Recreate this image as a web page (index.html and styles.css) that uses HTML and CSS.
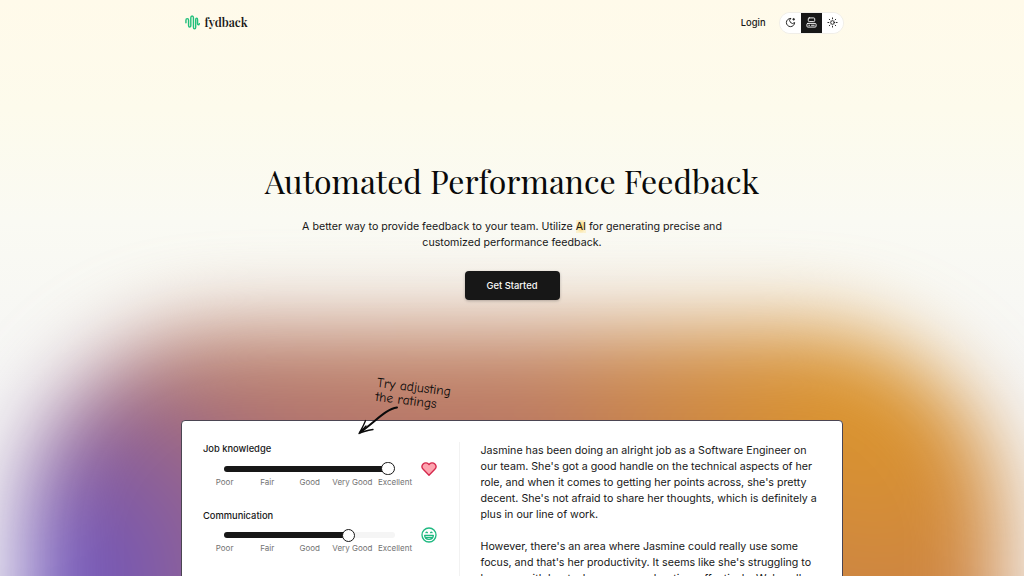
FILE: index.html
```html
<!doctype html>
<html lang="en">
  <head>
    <meta charset="UTF-8" />
    <meta name="viewport" content="width=device-width, initial-scale=1.0" />
    <title>fydback</title>
    <link rel="stylesheet" href="styles.css">
  </head>
  <body>
    <div class="glow"></div>

    <header class="navbar">
      <a class="brand" href="/">
        <svg viewBox="0 0 16 16">
          <path d="M1 8.3V5.6c0-2.3 2.8-2.3 2.8 0v5.6c0 2.2 2.4 2.2 2.4 0V3c0-2.6 2.8-2.6 2.8 0v10c0 2.4 2.4 2.4 2.4 0V5c0-2.2 2-2.2 2 0v4c0 1.8 1.6 1.8 1.9.2" />
        </svg>
        <span class="brand-name">fydback</span>
      </a>
      <nav class="nav-actions">
        <a class="login" href="/login">Login</a>
        <div class="theme-toggle">
          <button aria-label="Dark">
            <svg viewBox="0 0 24 24">
              <path d="M12 3a6 6 0 0 0 9 9 9 9 0 1 1-9-9Z" />
              <path d="M19 3v4M21 5h-4" />
            </svg>
          </button>
          <button class="active" aria-label="System">
            <svg viewBox="0 0 24 24">
              <rect width="14" height="8" x="5" y="2" rx="2" />
              <rect width="20" height="8" x="2" y="14" rx="2" />
              <path d="M6 18h2M12 18h6" />
            </svg>
          </button>
          <button aria-label="Light">
            <svg viewBox="0 0 24 24">
              <circle cx="12" cy="12" r="4" />
              <path d="M12 2v2M12 20v2M4.93 4.93l1.41 1.41M17.66 17.66l1.41 1.41M2 12h2M20 12h2M6.34 17.66l-1.41 1.41M19.07 4.93l-1.41 1.41" />
            </svg>
          </button>
        </div>
      </nav>
    </header>

    <main>
      <section class="hero">
        <h1>Automated Performance Feedback</h1>
        <p>
          A better way to provide feedback to your team. Utilize <mark>AI</mark> for generating precise and<br />
          customized performance feedback.
        </p>
        <a class="cta" href="/login">Get Started</a>
      </section>

      <section class="demo">
        <div class="hint">
          <div class="hint-text">Try adjusting<br />the ratings</div>
          <svg class="hint-arrow" viewBox="0 0 44 32">
            <path class="shaft" d="M41 2.5C30 4 20 16 4 27.5" />
            <path d="M9.5 15.500C8 20 5.5 24 3 28.5c4-2 8-3 14-4M3 28.5l7-7.5" />
          </svg>
        </div>

        <div class="ratings">
          <div class="rating">
            <h2>Job knowledge</h2>
            <div class="rating-row">
              <div class="slider">
                <div class="track"><div class="range" style="width: 96%"></div><div class="thumb"></div></div>
                <div class="labels">
                  <span>Poor</span><span>Fair</span><span>Good</span><span>Very Good</span><span>Excellent</span>
                </div>
              </div>
              <svg class="mood heart" viewBox="0 0 24 24">
                <path d="M12 21.5 3.3 12.5A5.7 5.7 0 0 1 3.2 4.6a5.7 5.7 0 0 1 8.8.8 5.7 5.7 0 0 1 8.8-.8 5.7 5.7 0 0 1-.1 7.900Z" />
              </svg>
            </div>
          </div>

          <div class="rating">
            <h2>Communication</h2>
            <div class="rating-row">
              <div class="slider">
                <div class="track"><div class="range" style="width: 73%"></div><div class="thumb"></div></div>
                <div class="labels">
                  <span>Poor</span><span>Fair</span><span>Good</span><span>Very Good</span><span>Excellent</span>
                </div>
              </div>
              <svg class="mood smile" viewBox="0 0 24 24">
                <circle cx="12" cy="12" r="10.5" />
                <path d="M5.5 12.5h13c0 8-13 8-13 0ZM7 15.5h10M7.5 8.5q1-1.5 2 0M14.5 8.5q1-1.5 2 0" />
              </svg>
            </div>
          </div>
        </div>

        <div class="feedback">
          <p>
            Jasmine has been doing an alright job as a Software Engineer on<br />
            our team. She's got a good handle on the technical aspects of her<br />
            role, and when it comes to getting her points across, she's pretty<br />
            decent. She's not afraid to share her thoughts, which is definitely a<br />
            plus in our line of work.
          </p>
          <p>
            However, there's an area where Jasmine could really use some<br />
            focus, and that's her productivity. It seems like she's struggling to<br />
            keep up with her tasks or manage her time effectively. We've all
          </p>
        </div>
      </section>
    </main>
  </body>
</html>
```
FILE: styles.css
```css
* {
  margin: 0;
  padding: 0;
  box-sizing: border-box;
}

body {
  position: relative;
  height: 576px;
  overflow: hidden;
  font-family: Inter, 'Liberation Sans', sans-serif;
  font-size: 10.67px;
  line-height: 16px;
  color: #171717;
  background: linear-gradient(#fffaea, #fdfbec 110px, #fafaf3 220px, #f5f5f5 400px);
}

a {
  color: inherit;
  text-decoration: none;
}

svg {
  fill: none;
  stroke: currentColor;
  stroke-width: 2;
  stroke-linecap: round;
  stroke-linejoin: round;
}

/* blurred backdrop behind the demo card */
.glow {
  position: absolute;
  z-index: -1;
  left: 26px;
  top: 327px;
  width: 976px;
  height: 620px;
  border-radius: 200px;
  filter: blur(41px);
  background:
    radial-gradient(circle at 4% 42%, #6b54c4 0, rgba(107, 84, 196, 0) 250px),
    radial-gradient(circle at 86% 13%, #dd962a 0, rgba(221, 150, 42, 0) 340px),
    linear-gradient(rgba(214, 160, 92, 0.5), rgba(214, 160, 92, 0) 130px),
    linear-gradient(90deg, #9c637f, #b4736b 40%, #c47a50);
}

.navbar {
  display: flex;
  align-items: center;
  justify-content: space-between;
  width: 663px;
  height: 45px;
  margin: 0 auto;
  padding-left: 4px;
}

.brand {
  display: flex;
  align-items: center;
  gap: 5px;
}

.brand svg {
  width: 15px;
  height: 15px;
  color: #20bf7b;
  stroke-width: 1.5;
}

.brand-name,
h1 {
  font-family: 'Playfair Display', 'Liberation Serif', serif;
}

.brand-name {
  font-size: 12px;
  font-weight: 600;
  line-height: 14px;
  padding-bottom: 1px;
}

.nav-actions {
  display: flex;
  align-items: center;
  gap: 13px;
}

.login {
  font-size: 9.33px;
  font-weight: 500;
}

.theme-toggle {
  display: flex;
  overflow: hidden;
  border: 1px solid #f0eee8;
  border-radius: 11px;
  background: #fff;
}

.theme-toggle button {
  display: flex;
  align-items: center;
  justify-content: center;
  width: 21px;
  height: 20px;
  border: 0;
  background: #fff;
  color: #171717;
}

.theme-toggle .active {
  background: #171717;
  color: #fff;
}

.theme-toggle svg {
  width: 11px;
  height: 11px;
}

.hero {
  display: flex;
  flex-direction: column;
  align-items: center;
  padding-top: 112px;
  text-align: center;
}

h1 {
  font-size: 32px;
  font-weight: 400;
  line-height: 48px;
  color: #0a0a0a;
}

.hero p {
  margin-top: 14px;
}

mark {
  color: inherit;
  background: radial-gradient(closest-side, #fccf5c, rgba(253, 224, 130, 0.3));
}

.cta {
  margin-top: 20px;
  width: 95px;
  height: 29px;
  border-radius: 4px;
  background: #171717;
  color: #fafafa;
  font-size: 9.4px;
  font-weight: 500;
  line-height: 29px;
  box-shadow: 0 1px 3px rgba(0, 0, 0, 0.25);
}

.demo {
  position: relative;
  display: flex;
  width: 662px;
  height: 400px;
  margin: 120px auto 0;
  padding: 21px;
  border: 1px solid #4b4552;
  border-radius: 4px;
  background: #fff;
}

.hint {
  position: absolute;
  left: 174px;
  top: -40px;
  width: 105px;
  color: #0a0a0a;
}

.hint-text {
  width: 85px;
  margin-left: 20px;
  font-family: 'Comic Neue', 'Open Sans', sans-serif;
  font-size: 13.5px;
  font-weight: 500;
  line-height: 13.5px;
  white-space: nowrap;
  transform: rotate(7deg);
}

.hint-arrow {
  position: absolute;
  left: 0;
  top: 24px;
  width: 44px;
  height: 32px;
  stroke-width: 1.3;
}

.hint-arrow .shaft {
  stroke-width: 2;
}

.ratings {
  width: 256.5px;
  border-right: 1px solid #f2f2f2;
}

.rating {
  height: 66.7px;
}

h2 {
  font-size: 9.33px;
  font-weight: 500;
  line-height: 13px;
}

.rating-row {
  display: flex;
}

.slider {
  width: 171px;
  margin: 10.5px 0 0 21.3px;
}

.track {
  display: flex;
  align-items: center;
  height: 6px;
  border-radius: 3px;
  background: #f5f5f5;
}

.range {
  height: 6px;
  border-radius: 3px 0 0 3px;
  background: #171717;
}

.thumb {
  flex: none;
  width: 13.3px;
  height: 13.3px;
  margin-left: -7px;
  border: 1.5px solid #171717;
  border-radius: 50%;
  background: #fff;
}

.labels {
  display: flex;
  justify-content: space-between;
  margin: 4px -21px 0;
  font-size: 8px;
  line-height: 13px;
  color: #737373;
}

.labels span {
  width: 42.6px;
  text-align: center;
  white-space: nowrap;
}

.mood {
  width: 16px;
  height: 16px;
  margin: 5.5px 0 0 26px;
}

.heart {
  color: #d5284c;
  fill: #fda4af;
}

.smile {
  color: #1fb981;
}

.feedback {
  padding: 0.5px 0 0 21px;
  white-space: nowrap;
}

.feedback p {
  margin-bottom: 16px;
}
```
